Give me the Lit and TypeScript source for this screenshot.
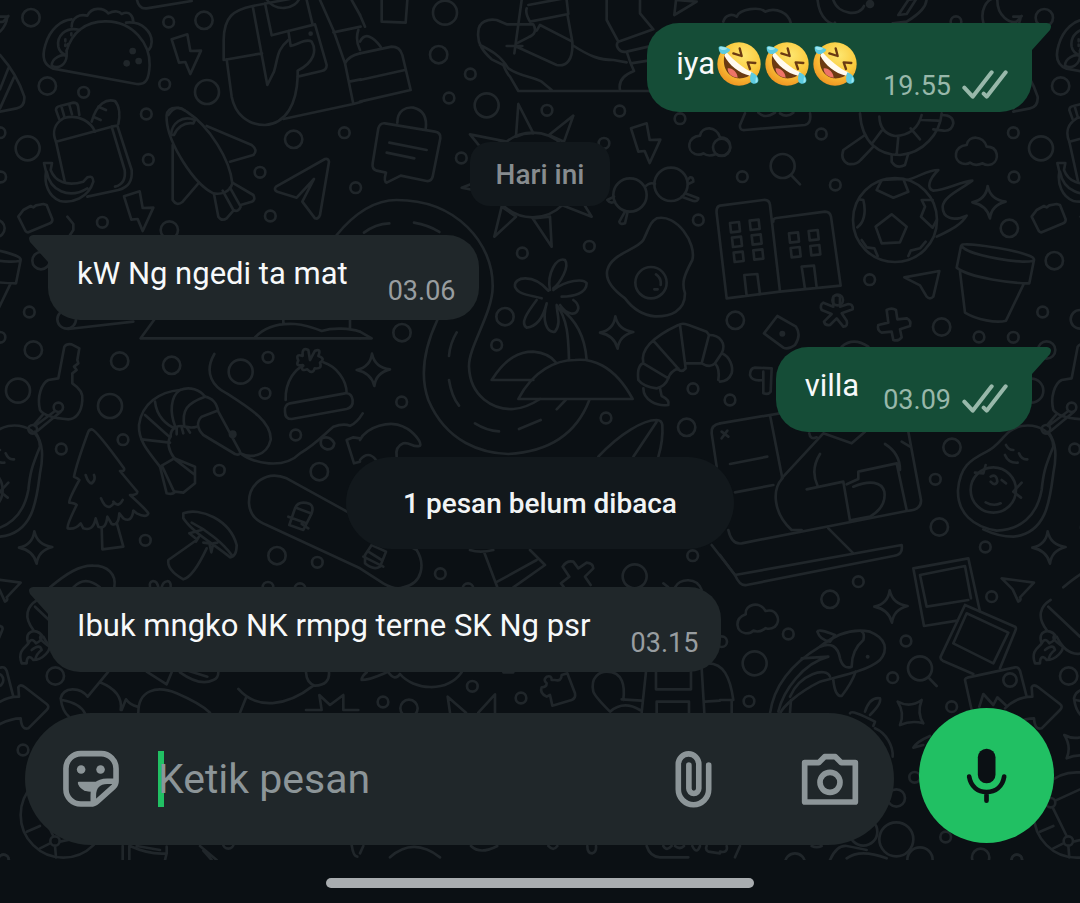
import { LitElement, html, svg, css, nothing } from "lit";
import { customElement, property } from "lit/decorators.js";
import { classMap } from "lit/directives/class-map.js";

type Dot = [number, number, number];
interface Sheet {
  at: [number, number];
  rings: Dot[];
  dots?: Dot[];
  lines: string[];
}

const BOLT = "M515 118L562 103L571 153L603 152L571 222L556 186L537 188Z";
const STAR = "M803 558Q812 600 857 605Q815 615 810 655Q800 615 757 607Q798 598 803 558Z";
const CLOUD =
  "M725 490C700 480 700 440 740 435C745 405 790 405 800 440C835 440 840 480 815 493Q800 498 788 490Q765 500 750 488Q740 495 725 490Z";
const SPARK = "M533 305Q570 325 605 300Q590 340 610 370Q575 360 540 375Q555 340 533 305Z";

const windowPane = (x: number, y: number) =>
  `M${x - 15} ${y - 13}L${x + 12} ${y - 16}L${x + 15} ${y + 12}L${x - 12} ${y + 15}Z`;

/* The doodle wallpaper, drawn on nine sheets at three units per pixel. */
const SHEETS: Sheet[] = [
  {
    at: [0, 0],
    rings: [
      [93, 53, 26], [506, 66, 16], [612, 61, 26], [142, 258, 26], [251, 277, 16], [494, 253, 16],
      [621, 276, 36], [439, 342, 16], [83, 445, 36], [445, 479, 16], [0, 398, 16], [2, 531, 16],
      [-12, 685, 26], [307, 667, 16], [508, 690, 26], [881, 418, 26], [1033, 398, 16],
      [780, 517, 16], [811, 648, 16], [1067, 563, 16], [123, 782, 26],
    ],
    dots: [[398, 153, 10], [380, 190, 10], [416, 183, 10], [932, 101, 7]],
    lines: [
      "M200 152C215 100 255 62 320 64C400 66 450 130 449 195C447 235 440 255 410 252L160 206C130 195 125 170 136 135C150 85 185 60 215 58",
      "M215 80C215 50 240 42 262 47C275 20 310 22 325 40C345 30 360 35 365 42C390 30 400 50 400 68",
      "M378 68C430 62 455 100 455 125C455 140 450 145 446 150",
      "M240 90C195 78 170 110 175 140C178 155 190 162 198 165M200 152V165M196 118V124M204 132V138M214 100V106M196 134V138",
      "M155 197C155 175 185 160 200 168C198 195 175 208 155 197",
      BOLT,
      "M671 180V120C672 50 700 30 758 18L905 -10M671 180L786 160M758 18L802 255L822 215C835 170 830 150 865 120M795 10L815 106L865 93",
      "M680 178L695 290C705 340 740 375 795 375C860 370 890 310 893 230M865 93L945 73L980 195Q980 210 965 213L893 230",
      "M865 93L872 138C900 130 920 115 935 125C950 150 945 185 893 212V230M795 -10C820 40 890 30 900 -10",
      "M850 357L1060 312L1035 190L1000 90L960 0M920 0L937 70M1000 97L1082 80M1035 190Q1045 168 1080 160M1048 245L1082 238M1060 312L1085 305M1055 0L1080 45M1075 90Q1065 120 1080 150",
      "M168 425C155 395 165 370 190 355C240 340 275 370 285 395M168 425L335 380L374 510C378 540 365 555 345 560",
      "M335 380L352 377L395 510C398 545 385 562 355 570L262 590M168 425L195 548",
      "M168 330Q168 320 180 318L220 308Q232 308 234 318L238 345M168 330L178 358M185 322L193 350M208 315L216 343",
      "M275 365C290 310 320 295 345 303C360 320 360 350 355 372M295 320L318 330M283 352L302 360",
      "M132 489H156L152 510C165 545 200 560 250 545L262 532Q280 525 280 545C265 595 215 610 180 603C145 590 132 550 138 515ZM140 515C150 570 205 600 262 565",
      "M500 360C495 320 530 315 560 335C630 380 690 480 697 550C690 575 665 585 640 580C580 550 505 430 500 360Z",
      "M513 405C515 370 545 345 585 360L580 370C550 365 530 385 522 405Z",
      "M505 345Q530 310 555 332M620 378L755 435Q775 450 760 465L690 485M518 435V600Q530 620 548 605L597 548",
      "M642 582L655 650Q665 665 680 655L700 632M697 548L760 585Q768 600 755 605L722 615M668 572L700 630Q715 638 722 620L690 563",
      "M828 560Q820 570 832 575L890 593L942 537L907 605L945 655Q955 658 960 645L987 485Q985 475 975 477Z",
      "M55 650L70 630L92 618L100 622L108 616L130 612L140 615L157 658Q158 665 150 670L85 697Q78 697 75 690Z",
      "M202 650L220 672V690L210 705M0 165C40 210 60 250 73 290Q75 320 50 325L0 335M25 205L0 268M42 232L0 325",
      "M0 50H22Q20 75 0 95M410 -5Q415 28 440 25L575 3",
    ],
  },
  {
    at: [1080, 0],
    rings: [
      [255, 38, 36], [236, 164, 26], [331, 222, 16], [267, 294, 16], [380, 316, 36], [561, 331, 16],
      [779, 333, 16], [960, 356, 16], [732, 430, 16], [304, 474, 16], [1015, 660, 16],
      [688, 739, 16], [487, 759, 16], [810, 585, 50], [933, 553, 50], [518, 525, 127], [873, 848, 47],
    ],
    lines: [
      "M0 160L95 140Q120 140 127 165L152 270L0 305M0 240L135 210M0 125C15 95 40 110 62 140M0 45L15 80M65 0V65L137 68L142 0",
      "M75 370L225 395Q243 398 241 415L218 530Q214 545 200 543L122 527L80 548Q70 545 78 518L50 512Q35 508 38 490L55 385Q60 368 75 370ZM88 428L200 450M80 458L163 475M112 368C112 330 140 320 160 323C190 330 202 350 197 388",
      "M355 95C355 65 385 55 410 60L440 73H520C530 90 525 105 505 112L470 130M355 95C350 130 370 155 395 178L430 195Q440 220 450 230L475 273H870M360 135C390 150 420 165 445 205C480 230 520 230 545 245L575 270",
      "M440 138H487M485 0L463 160M470 140L590 195C620 200 640 180 637 125L540 75L530 92M500 25Q495 40 510 65L625 42L620 0M505 15L612 -5M622 42L637 125M637 135C690 170 720 180 760 180L800 187",
      "M740 0V60L775 125L880 88L840 40V0M775 125C765 135 775 160 800 155L865 140M800 155L812 190L865 182M812 190L822 213C790 225 775 245 780 270M943 45L948 0L1010 5Z",
      "M475 312L468 410Q495 398 520 400ZM640 347L567 405L612 425ZM330 403L440 425L360 440ZM305 563L340 550V570ZM403 710L425 620L468 650ZM575 740L518 655L570 650ZM695 650L605 615L670 610Z",
      "M855 560Q870 545 885 552M982 540L990 532Q1000 530 1000 545L985 552M975 580L1015 595Q1015 605 1000 603L965 590M762 590L742 600Q750 612 765 605M795 635L778 665Q780 675 795 670L803 635",
      "M-70 705C0 620 60 600 110 600C290 600 400 730 398 860C398 940 325 1040 327 1100C330 1190 400 1230 460 1227C495 1225 520 1210 540 1197M12 698Q45 672 88 670M162 668Q205 675 238 696",
      "M570 870C560 820 590 770 615 780C630 800 600 850 580 865M565 872C520 820 460 830 465 860C475 885 510 885 545 895M580 870C620 840 670 835 680 850C680 880 640 890 605 890",
      "M890 655C950 640 1010 730 997 780C970 830 965 850 975 880C975 935 930 950 885 949C840 945 810 915 795 895C760 870 735 840 742 810C755 760 830 750 850 720C865 690 870 665 890 655ZM888 823Q905 835 902 855M883 868H893",
    ],
  },
  {
    at: [2160, 0],
    rings: [
      [708, 65, 16], [304, 402, 16], [5, 442, 26], [67, 530, 16], [346, 555, 16], [449, 839, 16],
      [353, 900, 16], [188, 498, 36], [525, 660, 126],
    ],
    dots: [[450, 12, 13]],
    lines: [
      "M10 65C15 45 35 40 50 50C60 25 120 20 135 35C170 20 205 40 212 68M292 -10C295 60 340 80 345 68M340 0C355 45 420 50 432 18",
      "M535 45L565 0L590 -5L560 42ZM518 70L560 65C600 40 620 20 620 -5M790 68C780 30 800 0 820 -5M832 0C832 50 870 70 890 65L905 48",
      "M75 340L60 375Q58 392 75 390L255 375Q275 370 270 340M115 338Q135 358 165 338M180 340Q200 355 220 338",
      "M420 340C425 430 480 465 540 465C610 460 660 400 665 340M478 350Q480 400 525 408Q590 405 605 345M485 392L455 432M535 410L530 463M572 385L600 418M605 360L655 362",
      "M435 405L370 450Q360 480 385 492Q410 495 422 480L460 440M515 465V485Q530 508 555 495L565 460M665 345Q700 345 700 370Q695 395 670 392L640 388",
      CLOUD,
      STAR,
      "M213 525L240 553",
      "M-10 640Q-12 620 0 617L130 600Q148 598 150 615L180 875M-10 640L20 895L180 875M160 665Q158 656 170 654L315 635Q330 635 333 650L362 857L180 875M80 888L73 825L112 822L120 883M255 867L245 800L282 797L290 862",
      [[45, 682], [104, 675], [51, 726], [110, 719], [56, 771], [115, 764], [222, 713], [281, 706], [227, 757], [286, 751]]
        .map(([x, y]) => windowPane(x, y))
        .join(""),
      "M515 643L560 680L540 727L485 730L467 680ZM470 570L485 540L550 537L565 575L520 593ZM418 598L430 600C440 640 430 670 412 682M638 600H605L615 620L603 650L638 683L650 660M425 720L440 742L463 745L473 768M565 768L572 752L600 745L617 725",
      "M560 540C600 530 620 510 655 510C625 540 620 565 640 572C680 570 720 545 757 542C720 570 670 590 668 620C668 655 700 665 740 647C720 680 680 695 650 710",
      "M725 735C730 725 940 755 942 778C940 800 725 765 725 735ZM723 738L710 803C750 835 880 850 928 850L942 780M720 815L735 938C770 960 830 970 858 962L912 850",
      "M553 832L658 813L640 890Q630 900 620 890L600 856Z",
    ],
  },
  {
    at: [0, 900],
    rings: [
      [88, 36, 16], [100, 150, 26], [0, 112, 16], [54, 272, 36], [200, 58, 28], [359, 183, 26],
      [515, 196, 26], [330, 318, 36], [722, 215, 36], [804, 172, 16], [795, 280, 16], [369, 419, 16],
      [184, 447, 16], [887, 405, 16], [658, 511, 16], [958, 515, 26], [436, 721, 16],
      [831, 767, 26], [952, 787, 16], [804, 862, 16], [900, 866, 16], [175, 322, 14], [98, 388, 13],
    ],
    dots: [[698, 403, 12]],
    lines: [
      "M462 60L422 115H1080M765 112C800 75 850 70 885 72C920 75 945 85 965 93C1000 82 1050 85 1080 95M850 60V72M1050 60V85M205 87L400 65",
      "M175 235L193 140Q200 130 215 133L238 145L232 180L235 190L222 200L230 210L217 220V250C240 265 250 280 247 300C245 340 225 358 205 358C165 355 130 345 120 330C110 290 125 250 145 240ZM165 333L105 378M182 335L112 393M128 345L102 375",
      "M275 388Q290 392 372 505Q375 515 360 513Q395 555 412 575Q412 585 390 585Q440 630 445 640Q440 655 410 640L400 632Q395 670 370 655L358 640Q355 680 335 672L322 650Q318 690 295 680L287 655Q280 695 250 685L242 670Q225 690 203 685Q200 675 230 615Q225 610 208 608Q205 600 238 540Q235 535 222 530Q230 490 265 395Q268 388 275 388Z",
      "M305 682L307 748L370 740L350 668M257 525Q265 550 275 550Q288 540 282 525M303 595Q315 625 330 620Q345 610 340 605Q355 625 368 600",
      "M480 500C440 450 415 420 417 375C425 310 480 275 540 270C570 258 600 270 615 290C640 295 650 310 655 335L720 455Q722 468 705 462L610 405C590 385 590 365 605 350L650 333",
      "M480 500L523 475C505 450 500 425 512 410C510 380 540 375 555 380Q575 385 590 380M425 418L510 428M435 345L508 410M465 305C470 350 500 375 525 385M540 270C510 290 510 340 525 378M615 290C560 310 545 330 553 380",
      "M480 500L500 580Q520 585 525 575L550 578L585 550V500L523 475M487 500L522 575M525 478L585 525M530 385V403M545 382L550 400M560 382L570 398",
      "M643 162C610 220 640 260 680 280C750 325 815 365 812 420C800 470 750 475 722 460C760 490 850 510 900 460C950 430 970 405 1000 380Q1030 370 1050 377Q1070 370 1088 340",
      "M857 300C855 240 890 205 910 197M970 187C1010 200 1040 240 1040 280M870 310L1035 280Q1055 278 1058 300Q1060 322 1040 327L875 357Q855 357 855 335Q852 315 870 310Z",
      "M930 180L925 150Q905 140 908 168Q885 160 895 182Q885 200 908 195Q900 215 922 208Q938 225 944 205Q968 208 960 188Q978 175 955 168Q965 145 945 152L930 180",
      "M1080 415L1060 412L1040 420L1062 490L1080 485M965 415Q990 405 1003 430Q1000 450 980 448Q955 440 965 415Z",
      "M550 640C600 620 690 660 710 735Q710 770 690 772C640 730 580 700 550 655ZM575 668C620 690 670 730 695 765M605 690L568 700L590 718M590 720L505 780Q500 810 550 838Q580 830 620 745M600 705L588 725M610 728L628 730L634 757L640 730L652 728",
      "M860 535L1250 750C1275 790 1270 850 1210 862C1190 870 1170 862 1150 850L1080 805L800 675C775 665 750 650 747 610C745 550 800 510 860 535Z",
      "M868 675L885 625Q895 600 930 612Q942 620 935 640L910 690ZM892 625L932 640M865 650L915 668M905 672L925 685",
      "M450 860C445 840 470 835 475 862M485 862C490 840 515 835 512 862M150 862C200 820 240 795 280 797C320 797 350 820 343 862M220 862Q255 825 300 862",
    ],
  },
  {
    at: [1080, 900],
    rings: [
      [126, 98, 26], [435, 50, 26], [410, 135, 16], [125, 306, 16], [999, 266, 16], [980, 382, 26],
      [738, 354, 16], [241, 821, 16], [824, 829, 36], [998, 767, 16], [324, 866, 16],
    ],
    lines: [
      "M0 95L35 115H0M232 60C190 150 180 230 205 300C260 430 370 460 445 462C570 455 650 400 688 300",
      "M290 97Q270 130 267 168M267 240Q275 290 297 317M345 370Q380 392 417 394M477 387L542 360M590 328L617 300",
      "M530 0C500 40 480 70 500 83C530 80 550 50 560 10M560 10C545 60 560 100 585 95C605 70 590 40 590 15M590 15C625 60 625 120 627 180M600 25C650 60 675 110 680 180M600 15C620 45 650 50 655 25Q655 10 640 0",
      "M475 297H818C760 190 690 175 645 180C590 180 520 210 475 297ZM520 240H395C440 170 480 155 520 155C550 158 575 170 587 187",
      "M0 420C20 380 90 360 130 380C165 395 185 430 180 437C160 445 150 425 130 430Q105 440 110 470M0 480Q25 450 48 480",
      "M850 190C840 150 880 110 955 75C970 65 985 75 1040 95L1047 105M850 190C845 190 830 200 835 240Q850 260 890 265Q915 260 925 235ZM880 122L960 212M960 75L977 205Q965 220 950 205M1047 105L1025 190M975 190H1025Q1050 205 1065 190M925 235Q930 215 955 205",
      "M850 265C850 300 890 320 925 315Q930 300 905 288L900 265M1047 105C1080 105 1100 130 1085 160C1110 170 1120 200 1115 220Q1105 245 1080 245M1085 160L1065 190Q1080 205 1075 240",
      "M715 470C780 400 850 360 890 360Q905 360 907 375Q910 420 895 470M890 365L820 470M1070 500L1055 400Q1052 375 1080 370",
      "M15 765L35 735L78 755L60 800Q40 812 15 790ZM10 770L70 800M25 755L65 780",
      "M330 750Q360 760 400 750M372 755L412 862M412 845L530 780M510 750L555 795L460 862M608 800Q620 780 640 785L655 805L680 788Q700 790 700 805L675 830L692 855M608 800L628 830L603 850L612 862",
      "M945 862C960 835 1010 830 1025 870M910 850L925 862M1055 735L1125 825",
    ],
  },
  {
    at: [2160, 900],
    rings: [
      [46, 61, 26], [665, 81, 26], [777, 111, 16], [30, 300, 16], [696, 442, 26], [646, 538, 16],
      [658, 681, 26], [796, 741, 16], [415, 845, 16], [330, 898, 26], [815, 890, 16], [820, 570, 68],
    ],
    dots: [[187, 101, 9]],
    lines: [
      "M340 -10V20L310 8Q298 15 305 30L335 42L312 65Q315 78 330 75L350 55L370 80Q385 80 380 62L365 40L398 28Q400 12 385 12L360 20V-10Q350 -20 340 -10Z",
      "M500 30Q515 22 528 30L532 58L560 55Q575 62 570 78L540 88L545 112Q535 125 520 120L515 95L485 98Q470 90 475 75L505 68Z",
      "M172 48L228 80Q245 105 225 135Q205 150 190 143L132 100ZM365 140Q400 110 445 140M155 205L152 275Q145 285 130 280V240Q95 245 90 225Q90 205 105 203ZM130 240V215",
      "M905 378C960 370 1000 400 1000 440C975 500 970 520 965 570C950 650 900 690 830 692C760 680 712 640 714 570C720 500 750 480 800 455C850 430 850 390 905 378Z",
      "M985 395C1010 430 1010 470 1000 520C990 600 980 700 880 710C840 710 815 700 790 688M797 495L790 520L765 518M905 548L880 575L903 593M855 465Q865 490 893 488M858 435Q865 450 880 450M897 460Q905 480 922 478M797 607Q820 620 842 610M812 530Q830 520 832 545Q825 560 812 545M845 540L858 550",
      "M0 370L370 308M150 345L187 535M25 690Q35 735 65 730L560 633Q605 630 603 600L565 395M30 492L142 470M45 577L160 555M5 395L25 410M22 392L5 415",
      "M185 535L310 400L395 430L435 395M187 535C155 570 160 640 215 690H245M300 462Q270 510 293 558M260 568L370 545L390 662M395 660L450 650Q500 620 493 575C485 545 450 540 400 560",
      "M380 553L415 537V515L530 490L560 630M495 432Q540 460 540 510M545 425L570 440M325 685L400 760M0 765L45 825L545 735Q550 765 520 768L80 855Q60 860 45 825M268 400Q270 420 290 412",
      "M580 805L745 775L780 935M580 805L612 978L712 962M600 825L735 798L753 895M600 825L620 920L745 900",
      "M845 835L942 848L900 892Q905 900 895 905L878 868Z",
    ],
  },
  {
    at: [0, 1800],
    rings: [[166, 228, 26], [69, 450, 16], [685, 730, 16], [10, 780, 16], [190, 645, 128], [165, 723, 14], [112, 608, 14]],
    lines: [
      "M65 190C50 150 80 140 85 130C70 90 110 85 125 105M80 190C80 170 90 165 100 180C130 180 150 150 148 140M85 130Q95 110 108 130Q130 120 125 105C110 115 135 130 148 140M95 150Q120 130 125 150Q110 160 105 180M65 190H80",
      "M112 0C80 20 70 50 100 90M105 20L200 110M130 110Q160 170 205 160",
      "M80 695L120 678M120 745L150 730M180 725L240 712M160 708L118 622M126 602L240 550M165 738L168 772",
      "M325 215L263 290C240 260 190 260 182 295C185 320 195 340 207 350M300 247Q370 275 362 330M187 300Q240 310 255 340M365 330L378 298Q390 315 412 320M415 338C415 270 470 255 530 280Q600 310 630 338",
      "M440 215L500 253L515 217M540 217Q600 260 640 240Q655 235 655 217M540 205L622 230M715 267C770 330 860 320 940 257M738 293L720 338M918 217Q920 250 945 257Q990 255 987 217M918 330H965L958 285L990 315L1030 285V330H1075",
      "M368 738V780M388 738V780M390 738Q450 765 500 760V740M410 738L480 750M500 760L495 780M600 738L650 780M610 752L635 780M1055 735Q1060 770 1072 770",
    ],
  },
  {
    at: [1080, 1800],
    rings: [[337, 259, 16], [69, 306, 16], [147, 325, 26], [483, 294, 16]],
    lines: [
      "M20 217Q5 228 5 240C30 240 60 225 80 217M85 217Q105 245 120 222C160 270 260 280 305 217M430 217H460M270 338L263 290L318 338M355 338L405 283V338",
      "M575 240Q575 225 560 230Q548 240 560 250Q560 262 545 262Q538 280 560 290L570 285L577 317L635 300Q648 295 645 280L622 220L605 225Q605 245 585 240Z",
      "M700 275C690 230 720 215 740 215C790 215 795 260 790 300M700 275Q705 290 750 335Q790 300 840 330M785 298L845 302M858 215L845 338M888 215V268H993V215M890 338V305H987V338M1025 205L1033 338M1035 305L1080 302M1045 190C1090 190 1110 230 1120 300H1080M1115 300V338",
      "M0 760L10 738M90 772Q160 710 240 772M333 738Q360 765 412 738M565 738Q580 755 592 738M682 738Q682 760 697 760Q710 755 708 738M860 738Q870 770 900 772H985M910 738Q920 755 935 738M945 738Q960 750 972 738M997 738Q1010 765 1020 738M1040 738Q1035 750 1045 755L1080 760",
    ],
  },
  {
    at: [2160, 1800],
    rings: [
      [205, 102, 16], [5, 125, 16], [104, 190, 36], [87, 304, 16], [558, 123, 16], [518, 233, 16],
      [600, 205, 36], [695, 320, 16], [870, 240, 20], [584, 532, 16], [529, 594, 26], [529, 718, 51],
      [430, 695, 42], [600, 780, 38], [677, 711, 16], [782, 772, 26], [891, 780, 16], [225, 790, 30],
    ],
    dots: [[443, 170, 6]],
    lines: [
      "M625 232L650 258M735 15L885 80Q890 84 886 92L840 205M735 15L662 170Q660 178 668 182L760 222M740 40L865 98L820 190L700 130Z",
      "M755 330L735 240Q735 235 742 233L885 202Q895 200 900 212L920 290M778 320L790 282L820 315L832 292L860 318",
      "M855 325C880 300 910 290 937 290L935 262Q940 250 955 262L1020 312Q1030 320 1020 330L965 385Q945 392 942 355C920 355 900 362 880 372",
      "M150 340C160 270 200 200 300 140C350 100 400 85 450 95C500 115 505 150 480 180C440 215 350 230 300 245C230 280 190 320 180 340",
      "M300 140Q350 120 360 175Q370 210 395 200Q395 150 430 120Q435 100 425 95M292 95Q295 85 345 105L330 125Q300 120 292 95ZM245 175L325 170C250 190 190 270 175 335M340 240Q345 290 365 288Q395 250 407 215M210 290C240 220 320 200 330 230M213 300L210 338",
      "M390 340Q395 328 465 365L460 378M435 335Q450 290 480 295Q485 310 450 345M465 385C500 400 520 440 518 470M630 408Q590 425 580 443L610 435",
      SPARK,
      "M0 755Q25 760 20 738M45 772L60 738M330 780Q350 735 380 738Q420 745 440 750M380 775Q420 745 500 775M275 738Q290 745 305 738",
    ],
  },
];

const wallpaperTile = (x: number) => svg`
  <g transform="translate(${x} 0)">
    ${SHEETS.map(
      (s) => svg`<g transform="translate(${s.at[0]} ${s.at[1]})">
        ${s.lines.map((d) => svg`<path d=${d} />`)}
        ${s.rings.map(([cx, cy, r]) => svg`<circle cx=${cx} cy=${cy} r=${r} />`)}
        ${(s.dots ?? []).map(([cx, cy, r]) => svg`<circle class="dot" cx=${cx} cy=${cy} r=${r} />`)}
      </g>`
    )}
    <path d=${BOLT} transform="translate(-143 471)" />
    <path d=${BOLT} transform="translate(1378 267)" />
    <path d=${CLOUD} transform="translate(1360 -28)" />
    <path d=${CLOUD} transform="translate(1500 1400) rotate(-14 770 450)" />
    <path d=${STAR} transform="translate(-700 1036)" />
    <path d=${STAR} transform="translate(313 503)" />
    <path d=${STAR} transform="translate(1043 391)" />
    <path d=${STAR} transform="translate(1866 1213)" />
    <path d=${SPARK} transform="translate(2660 1900)" />
  </g>`;

@customElement("doodle-wallpaper")
export class DoodleWallpaper extends LitElement {
  static styles = css`
    :host {
      display: block;
      overflow: hidden;
    }
    svg {
      display: block;
      width: 100%;
      height: 100%;
      fill: none;
      stroke: #20262a;
      stroke-width: 8;
      stroke-linejoin: round;
      stroke-linecap: round;
    }
    .dot {
      fill: #20262a;
      stroke: none;
    }
  `;
  render() {
    return html`<svg aria-hidden="true">
      <g transform="scale(0.33333)">${[-3040, 0, 3040].map(wallpaperTile)}</g>
    </svg>`;
  }
}

const laughing = html`<svg class="emoji" viewBox="47 60 144 144" role="img" aria-label="🤣">
  <defs>
    <radialGradient id="skin" cx="0.6" cy="0.3" r="0.75">
      <stop offset="0" stop-color="#fde66f" />
      <stop offset="0.55" stop-color="#fbc93c" />
      <stop offset="1" stop-color="#ee9220" />
    </radialGradient>
  </defs>
  <circle cx="119" cy="132" r="65" fill="url(#skin)" />
  <path d="M78 97C66 130 78 168 114 175C132 177 150 170 158 160C128 148 100 124 78 97Z" fill="#6b3a12" />
  <path d="M85 145C98 142 114 156 115 173C97 172 84 160 85 145Z" fill="#ee7468" />
  <path d="M80 95C105 122 130 144 160 157L152 167C120 160 88 134 75 107Z" fill="#fffaf0" />
  <path d="M121 85L127 108L102 100M168 129L145 127L152 147" fill="none" stroke="#6b3a12" stroke-width="7" stroke-linecap="round" stroke-linejoin="round" />
  <path d="M58 84C56 76 74 76 92 88C94 92 88 98 76 102C66 104 58 96 58 84Z" fill="#5ccbe0" />
  <path d="M60 84C62 78 74 80 84 86C76 92 64 92 60 84Z" fill="#9be6f0" />
  <path d="M156 157C170 162 178 172 177 183C174 193 160 194 154 186C151 178 152 168 156 157Z" fill="#5ccbe0" />
  <path d="M170 170C177 178 176 188 168 188Z" fill="#9be6f0" />
</svg>`;

@customElement("message-bubble")
export class MessageBubble extends LitElement {
  @property() text = "";
  @property() time = "";
  @property({ type: Number }) laughs = 0;
  @property({ type: Boolean, reflect: true }) outgoing = false;

  static styles = css`
    :host {
      display: flex;
      --fill: #20272a;
      --meta: #989da0;
      padding: 0 48px;
    }
    :host([outgoing]) {
      justify-content: flex-end;
      --fill: #154d37;
      --meta: #98b8aa;
    }
    .bubble {
      position: relative;
      box-sizing: border-box;
      display: flex;
      gap: 40px;
      min-height: 85px;
      padding: 0 23px 0 29px;
      border-radius: 0 32px 32px 32px;
      background: var(--fill);
    }
    :host([outgoing]) .bubble {
      gap: 24px;
      padding-right: 24px;
      border-radius: 32px 0 32px 32px;
    }
    .text {
      margin: 19px 0 0;
      font-size: 31px;
      line-height: 40px;
      color: #f7f9fa;
    }
    .meta {
      display: flex;
      align-self: flex-end;
      gap: 11px;
      padding-bottom: 13px;
      font-size: 27px;
      line-height: 32px;
      color: var(--meta);
    }
    :host([outgoing]) .meta {
      padding-bottom: 16px;
    }
    .tall {
      min-height: 89px;
    }
    .tall .text {
      display: flex;
      margin-top: 21px;
    }
    :host([outgoing]) .tall .meta {
      padding-bottom: 10px;
    }
    .emoji {
      width: 48px;
      height: 48px;
      margin-top: -4px;
    }
    .ticks {
      width: 46px;
      height: 32px;
      fill: none;
      stroke: var(--meta);
      stroke-width: 12;
      stroke-linecap: round;
      stroke-linejoin: round;
    }
    .tail {
      position: absolute;
      top: 0;
      left: -19px;
      width: 20px;
      height: 28px;
      fill: var(--fill);
      transform: scaleX(-1);
    }
    :host([outgoing]) .tail {
      left: auto;
      right: -19px;
      transform: none;
    }
  `;

  render() {
    return html`<div class=${classMap({ bubble: true, tall: this.laughs > 0 })}>
      <svg class="tail" viewBox="0 0 20 28" aria-hidden="true"><path d="M0 0H16Q22 1 19 7L1 27V28H0Z" /></svg>
      <p class="text">${this.text}${Array.from({ length: this.laughs }, () => laughing)}</p>
      <div class="meta">
        <time>${this.time}</time>
        ${this.outgoing
          ? html`<svg class="ticks" viewBox="725 208 138 96" role="img" aria-label="Terkirim">
              <path d="M732 261L757 288L814 215M790 279L799 288L856 215" />
            </svg>`
          : nothing}
      </div>
    </div>`;
  }
}

@customElement("app-root")
export class AppRoot extends LitElement {
  static styles = css`
    :host {
      display: flex;
      flex-direction: column;
      min-height: 100vh;
      background: #0b1014;
      font-family: Roboto, "Liberation Sans", sans-serif;
    }
    main {
      position: relative;
      flex: 1;
      display: flex;
      flex-direction: column;
    }
    doodle-wallpaper {
      position: absolute;
      inset: 0;
    }
    .thread {
      position: relative;
      flex: 1;
      display: flex;
      flex-direction: column;
      padding: 23px 0 36px;
    }
    .notice {
      align-self: center;
      background: #12181c;
      font-weight: 500;
      font-size: 28px;
      line-height: 32px;
      text-align: center;
    }
    .date {
      margin: 30px 0 29px;
      padding: 17px 26px 15px;
      border-radius: 20px;
      color: #878c8f;
    }
    .unread {
      margin: 25px 0 38px;
      padding: 31px 57px 29px;
      border-radius: 46px;
      color: #f1f4f5;
    }
    .reply {
      margin-top: 27px;
    }
    .composer {
      position: relative;
      display: flex;
      align-items: flex-start;
      gap: 25px;
      padding: 0 26px 15px 25px;
    }
    .field {
      flex: 1;
      min-width: 0;
      box-sizing: border-box;
      display: flex;
      align-items: center;
      height: 132px;
      margin-top: 5px;
      padding: 0 35px 0 37px;
      border-radius: 66px;
      background: #20272a;
    }
    button {
      flex: none;
      display: flex;
      align-items: center;
      justify-content: center;
      padding: 0;
      border: 0;
      background: none;
      color: #8c9598;
      cursor: pointer;
    }
    .entry {
      position: relative;
      flex: 1;
      min-width: 0;
      margin: 0 24px 0 38px;
    }
    .entry::before {
      content: "";
      position: absolute;
      left: 0;
      top: 0;
      width: 6px;
      height: 56px;
      background: #21c063;
    }
    input {
      display: block;
      width: 100%;
      height: 56px;
      padding: 0;
      border: 0;
      outline: 0;
      background: none;
      font: 41px/56px Roboto, "Liberation Sans", sans-serif;
      color: #f7f9fa;
      caret-color: transparent;
      position: relative;
    }
    input::placeholder {
      color: #8c9598;
      opacity: 1;
    }
    .icon {
      fill: none;
      stroke: currentColor;
      stroke-width: 17;
      stroke-linecap: round;
      stroke-linejoin: round;
    }
    .fine {
      stroke-width: 14;
    }
    .solid {
      fill: currentColor;
      stroke: none;
    }
    .flat {
      stroke-linecap: butt;
    }
    .camera {
      margin-left: 89px;
    }
    .mic {
      width: 135px;
      height: 135px;
      border-radius: 50%;
      background: #21c063;
      color: #0b1014;
    }
    footer {
      display: flex;
      justify-content: center;
      padding: 18px 0 17px;
    }
    .handle {
      width: 428px;
      max-width: 60%;
      height: 10px;
      border-radius: 5px;
      background: #a9adb0;
    }
  `;

  render() {
    return html`
      <main>
        <doodle-wallpaper></doodle-wallpaper>
        <section class="thread">
          <message-bubble outgoing text="iya" laughs="3" time="19.55"></message-bubble>
          <div class="notice date">Hari ini</div>
          <message-bubble text="kW Ng ngedi ta mat" time="03.06"></message-bubble>
          <message-bubble class="reply" outgoing text="villa" time="03.09"></message-bubble>
          <div class="notice unread">1 pesan belum dibaca</div>
          <message-bubble text="Ibuk mngko NK rmpg terne SK Ng psr" time="03.15"></message-bubble>
        </section>
        <form class="composer" @submit=${(e: Event) => e.preventDefault()}>
          <div class="field">
            <button type="button" aria-label="Stiker">
              <svg class="icon" width="58" height="58" viewBox="186 450 174 176">
                <path d="M242 461H304A45 45 0 0 1 349 506V544Q349 554 342 561L292 606Q283 614 272 614H242A45 45 0 0 1 197 569V506A45 45 0 0 1 242 461Z" />
                <path class="flat" d="M280 612V588Q280 546 322 545H349" />
                <path class="solid" d="M236 546H296L280 576C255 580 236 565 233 550Q233 546 236 546Z" />
                <circle class="solid" cx="243" cy="509" r="13" />
                <circle class="solid" cx="302" cy="509" r="13" />
              </svg>
            </button>
            <label class="entry">
              <input type="text" placeholder="Ketik pesan" aria-label="Ketik pesan" />
            </label>
            <button type="button" aria-label="Lampirkan">
              <svg class="icon" width="37" height="58" viewBox="943 449 112 174">
                <path d="M1045 494V568A46 46 0 0 1 953 568V491A31 31 0 0 1 1015 491V565A15 15 0 0 1 985 565V494" />
              </svg>
            </button>
            <button type="button" class="camera" aria-label="Kamera">
              <svg class="icon" width="58" height="53" viewBox="243 457 174 159">
                <path d="M254 604V486H296L314 468H346L364 486H406V604Z" />
                <circle cx="330" cy="545" r="30" />
              </svg>
            </button>
          </div>
          <button type="button" class="mic" aria-label="Rekam suara">
            <svg class="icon fine" width="41" height="56" viewBox="740 439 122 168">
              <rect class="solid" x="775" y="441" width="53" height="104" rx="26" />
              <path d="M749 525C754 556 776 571 801 571C827 571 849 556 854 525M801 573V597" />
            </svg>
          </button>
        </form>
      </main>
      <footer><div class="handle"></div></footer>
    `;
  }
}
